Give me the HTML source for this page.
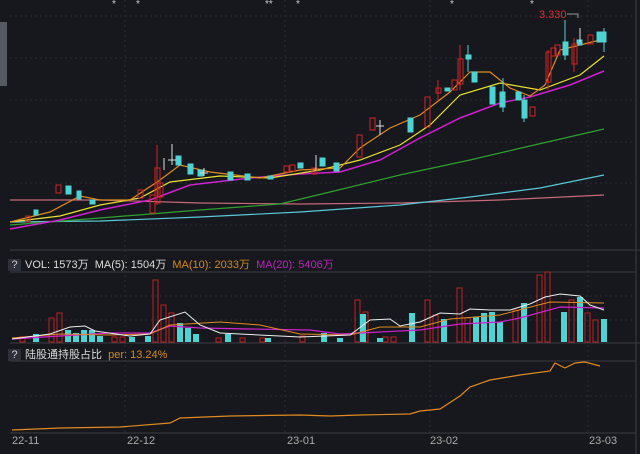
<!DOCTYPE html><html><head><meta charset="utf-8"><style>
body{margin:0;background:#16181d;width:640px;height:454px;overflow:hidden;font-family:"Liberation Sans","Noto Sans CJK SC",sans-serif}
svg{position:absolute;left:0;top:0}
.t{position:absolute;font-size:11px;white-space:nowrap}
.q{display:inline-block;background:#2d3038;color:#ccc;width:13px;text-align:center;margin-right:4px}
</style></head><body>
<svg width="640" height="454">
<rect x="0" y="22" width="7" height="64" fill="#555a60"/>
<g stroke="#2a2d34" stroke-dasharray="2,3">
<line x1="10" y1="16" x2="636" y2="16"/><line x1="10" y1="58" x2="636" y2="58"/><line x1="10" y1="100" x2="636" y2="100"/><line x1="10" y1="142" x2="636" y2="142"/><line x1="10" y1="183" x2="636" y2="183"/><line x1="10" y1="225" x2="636" y2="225"/>
<line x1="10" y1="296" x2="636" y2="296"/><line x1="10" y1="320" x2="636" y2="320"/><line x1="10" y1="396" x2="636" y2="396"/>
<line x1="125" y1="0" x2="125" y2="433"/><line x1="285" y1="0" x2="285" y2="433"/><line x1="430" y1="0" x2="430" y2="433"/><line x1="588" y1="0" x2="588" y2="433"/>
</g>
<g stroke="#3a3d44"><line x1="10" y1="250" x2="640" y2="250"/><line x1="10" y1="272" x2="636" y2="272"/><line x1="10" y1="343" x2="640" y2="343"/><line x1="10" y1="361" x2="636" y2="361"/><line x1="10" y1="433" x2="636" y2="433"/><line x1="636" y1="0" x2="636" y2="454"/></g>
<g fill="#ccc" font-size="10"><text x="112" y="7">*</text><text x="136" y="7">*</text><text x="265" y="7">**</text><text x="296" y="7">*</text><text x="450" y="7">*</text><text x="530" y="7">*</text></g>
<text x="539" y="18" fill="#e03030" font-size="11">3.330</text><path d="M567 14H578V18" stroke="#999" fill="none"/>
<!-- long MAs -->
<polyline fill="none" stroke="#c86a78" stroke-width="1.2" points="10,200 100,200 200,203 300,204 400,203 500,200 604,195"/>
<polyline fill="none" stroke="#5ac8d8" stroke-width="1.2" points="10,222 100,221 200,217 300,212 400,205 470,197 540,188 604,175"/>
<polyline fill="none" stroke="#2fa02f" stroke-width="1.2" points="10,225 100,218 200,210 280,204 330,192 400,175 470,160 530,146 604,129"/>
<polyline fill="none" stroke="#d020d0" stroke-width="1.5" points="10,229 60,220 100,210 150,200 190,185 250,178 300,174 340,172 380,160 420,138 460,118 500,103 530,97 570,85 604,71"/>
<polyline fill="none" stroke="#e8e030" stroke-width="1.2" points="10,222 60,216 100,205 140,198 170,182 220,176 270,178 320,170 360,160 400,145 430,125 460,95 500,83 540,90 580,75 604,56"/>
<polyline fill="none" stroke="#e08a20" stroke-width="1.2" points="10,222 50,212 80,196 100,200 130,200 160,180 180,165 210,172 260,178 300,170 340,168 360,148 390,128 420,115 450,92 470,72 490,72 510,88 530,96 545,85 560,50 600,40"/>
<!-- candles: cyan -->
<g fill="#4ed2d2" stroke="#4ed2d2">
<rect x="34" y="210" width="4" height="5"/><rect x="66" y="186" width="5" height="8"/><rect x="77" y="191" width="4" height="8"/><rect x="90" y="200" width="5" height="4"/>
<rect x="176" y="156" width="5" height="9"/><rect x="188" y="164" width="5" height="10"/><rect x="198" y="170" width="5" height="6"/><rect x="228" y="172" width="5" height="8"/><rect x="245" y="174" width="5" height="6"/><rect x="268" y="176" width="5" height="3"/>
<rect x="298" y="163" width="5" height="5"/><rect x="320" y="158" width="5" height="8"/><rect x="334" y="163" width="5" height="8"/>
<rect x="408" y="118" width="5" height="14"/><rect x="445" y="88" width="5" height="3"/><rect x="466" y="55" width="5" height="4"/><rect x="472" y="72" width="5" height="10"/>
<rect x="490" y="87" width="5" height="17"/><rect x="500" y="92" width="5" height="15"/><rect x="516" y="92" width="5" height="8"/><rect x="522" y="100" width="5" height="18"/>
<rect x="563" y="42" width="5" height="13"/><rect x="577" y="40" width="5" height="5"/><rect x="597" y="32" width="5" height="10"/><rect x="601" y="32" width="5" height="10"/>
</g>
<g stroke="#4ed2d2"><line x1="468" y1="45" x2="468" y2="72"/><line x1="503" y1="78" x2="503" y2="112"/><line x1="524" y1="95" x2="524" y2="122"/><line x1="565" y1="20" x2="565" y2="60"/><line x1="604" y1="28" x2="604" y2="52"/></g>
<!-- red candles -->
<g fill="none" stroke="#d02525">
<rect x="26" y="216" width="4" height="6"/><rect x="56" y="185" width="5" height="8"/><rect x="150" y="195" width="5" height="18"/><rect x="158" y="183" width="5" height="14"/><rect x="155" y="168" width="5" height="35"/><rect x="138" y="190" width="5" height="8"/>
<rect x="284" y="166" width="5" height="6"/><rect x="290" y="165" width="5" height="6"/><rect x="312" y="168" width="5" height="6"/><rect x="357" y="135" width="5" height="22"/>
<rect x="370" y="118" width="5" height="12"/><rect x="425" y="97" width="5" height="30"/><rect x="436" y="88" width="5" height="5"/><rect x="452" y="80" width="5" height="10"/><rect x="458" y="59" width="5" height="25"/>
<rect x="530" y="107" width="5" height="9"/><rect x="546" y="52" width="5" height="30"/><rect x="551" y="48" width="5" height="8"/><rect x="555" y="45" width="5" height="10"/><rect x="572" y="44" width="5" height="20"/><rect x="588" y="35" width="5" height="9"/>
</g>
<g stroke="#d02525"><line x1="157" y1="145" x2="157" y2="205"/><line x1="460" y1="45" x2="460" y2="90"/><line x1="438" y1="80" x2="438" y2="100"/><line x1="574" y1="38" x2="574" y2="72"/><line x1="548" y1="50" x2="548" y2="90"/></g>
<g stroke="#ddd"><line x1="172" y1="144" x2="172" y2="165"/><line x1="168" y1="160" x2="176" y2="160"/><line x1="164" y1="158" x2="164" y2="170"/><line x1="204" y1="168" x2="204" y2="176"/><line x1="200" y1="173" x2="208" y2="173"/><line x1="316" y1="155" x2="316" y2="170"/><line x1="580" y1="28" x2="580" y2="42"/><line x1="380" y1="120" x2="380" y2="135"/><line x1="376" y1="126" x2="384" y2="126"/></g>
<!-- volume -->
<g fill="none" stroke="#c02020">
<rect x="49" y="318" width="5" height="24"/><rect x="57" y="313" width="5" height="29"/><rect x="153" y="280" width="5" height="62"/><rect x="161" y="305" width="5" height="37"/><rect x="169" y="313" width="5" height="29"/><rect x="112" y="337" width="5" height="5"/><rect x="120" y="337" width="5" height="5"/><rect x="216" y="338" width="5" height="4"/><rect x="240" y="338" width="5" height="4"/>
<rect x="355" y="300" width="5" height="42"/><rect x="363" y="312" width="5" height="30"/><rect x="425" y="300" width="5" height="42"/><rect x="433" y="315" width="5" height="27"/><rect x="457" y="288" width="5" height="54"/><rect x="465" y="318" width="5" height="24"/><rect x="513" y="310" width="5" height="32"/><rect x="537" y="275" width="5" height="67"/><rect x="545" y="272" width="5" height="70"/><rect x="569" y="300" width="5" height="42"/><rect x="585" y="313" width="5" height="29"/><rect x="593" y="320" width="5" height="22"/>
<rect x="383" y="337" width="5" height="5"/><rect x="391" y="337" width="5" height="5"/><rect x="20" y="337" width="5" height="5"/><rect x="260" y="338" width="5" height="4"/><rect x="300" y="336" width="5" height="6"/>
</g>
<g fill="#4ed2d2">
<rect x="33" y="334" width="6" height="8"/><rect x="65" y="330" width="6" height="12"/><rect x="73" y="333" width="6" height="9"/><rect x="81" y="330" width="6" height="12"/><rect x="89" y="330" width="6" height="12"/><rect x="97" y="336" width="6" height="6"/><rect x="129" y="337" width="6" height="5"/><rect x="145" y="336" width="6" height="6"/><rect x="177" y="323" width="6" height="19"/><rect x="185" y="328" width="6" height="14"/><rect x="193" y="334" width="6" height="8"/><rect x="225" y="334" width="6" height="8"/><rect x="265" y="338" width="6" height="4"/><rect x="321" y="333" width="6" height="9"/><rect x="337" y="338" width="6" height="4"/>
<rect x="360" y="314" width="6" height="28"/><rect x="377" y="338" width="6" height="4"/><rect x="409" y="313" width="6" height="29"/><rect x="441" y="319" width="6" height="23"/><rect x="473" y="317" width="6" height="25"/><rect x="481" y="313" width="6" height="29"/><rect x="489" y="312" width="6" height="30"/><rect x="497" y="322" width="6" height="20"/><rect x="521" y="303" width="6" height="39"/><rect x="561" y="312" width="6" height="30"/><rect x="577" y="297" width="6" height="45"/><rect x="601" y="319" width="6" height="23"/>
</g>
<polyline fill="none" stroke="#d020d0" stroke-width="1.2" points="12,339 60,336 110,333 150,333 170,326 200,328 250,329 310,330 340,334 360,333 380,332 420,330 460,324 500,322 520,318 560,307 604,308"/>
<polyline fill="none" stroke="#e08a20" stroke-width="1" points="12,338 60,334 110,335 150,334 170,325 220,322 260,325 300,334 350,335 380,327 420,327 450,319 500,315 550,302 604,303"/>
<polyline fill="none" stroke="#eee" stroke-width="1" points="12,339 50,334 70,327 85,326 95,331 130,336 150,334 160,320 185,312 200,325 220,333 300,337 350,335 370,320 390,319 400,326 420,322 440,313 460,314 470,309 490,310 510,310 530,304 545,297 560,294 580,296 590,305 604,310"/>
<polyline fill="none" stroke="#e08a20" stroke-width="1.2" points="12,430 60,428 120,427 170,423 180,418 230,416 300,415 330,416 360,415 410,414 420,411 440,409 460,396 470,387 490,380 520,375 550,371 555,363 565,368 575,363 585,362 600,366"/>
</svg>
<div class="t" style="left:8px;top:256px;color:#ddd"><span class="q">?</span>VOL: 1573万 &nbsp;MA(5): 1504万 <span style="color:#d48a1a">&nbsp;MA(10): 2033万</span> <span style="color:#c020c0">&nbsp;MA(20): 5406万</span></div>
<div class="t" style="left:8px;top:346px;color:#ddd"><span class="q">?</span>陆股通持股占比 <span style="color:#d48a1a">&nbsp;per: 13.24%</span></div>
<div class="t" style="top:435px;left:12px;color:#aaa">22-11</div>
<div class="t" style="top:435px;left:127px;color:#aaa">22-12</div>
<div class="t" style="top:435px;left:287px;color:#aaa">23-01</div>
<div class="t" style="top:435px;left:430px;color:#aaa">23-02</div>
<div class="t" style="top:435px;left:589px;color:#aaa">23-03</div>
</body></html>
